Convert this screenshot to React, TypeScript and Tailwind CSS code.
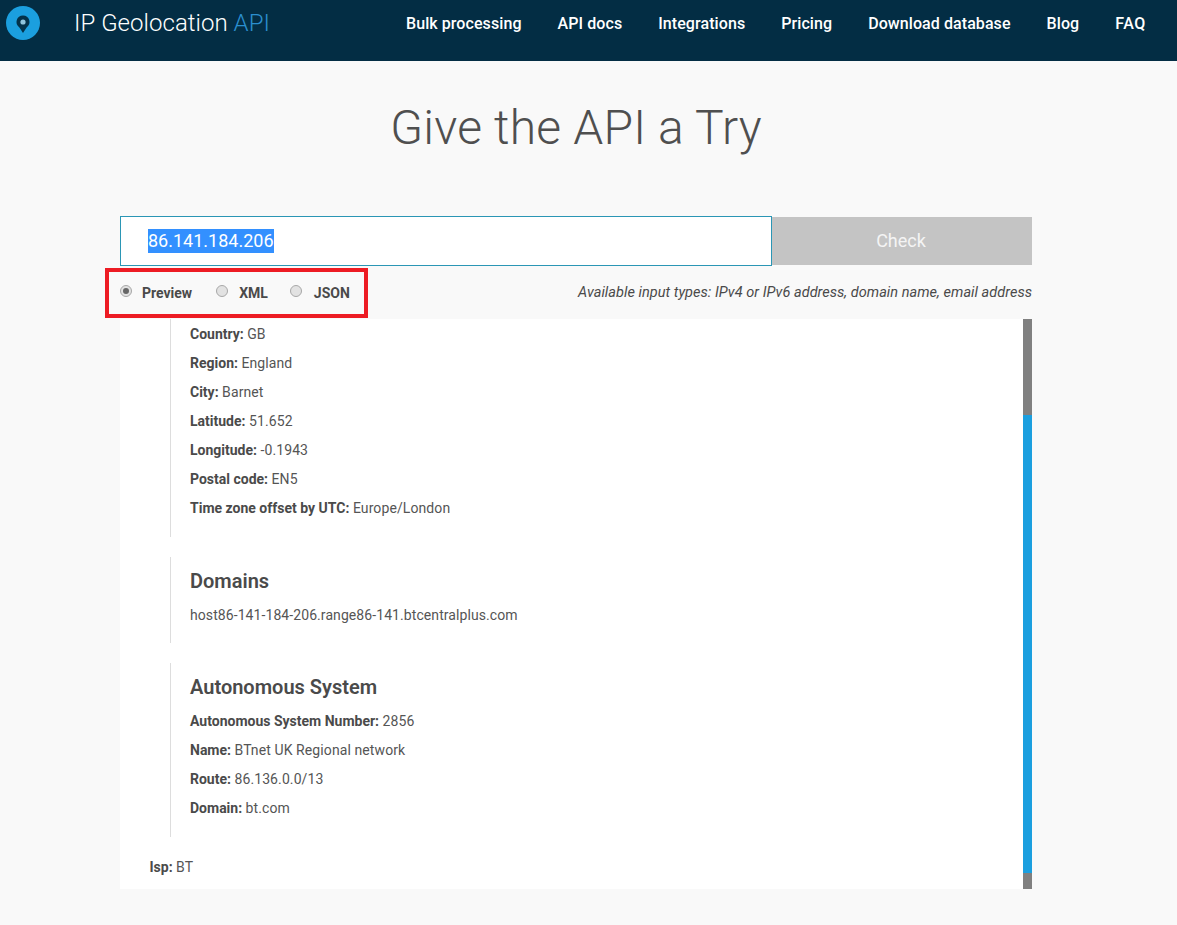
import React from 'react';

const navLinks = ['Bulk processing', 'API docs', 'Integrations', 'Pricing', 'Download database', 'Blog', 'FAQ'];

const location = [
  ['Country:', 'GB'],
  ['Region:', 'England'],
  ['City:', 'Barnet'],
  ['Latitude:', '51.652'],
  ['Longitude:', '-0.1943'],
  ['Postal code:', 'EN5'],
  ['Time zone offset by UTC:', 'Europe/London'],
];

const system = [
  ['Autonomous System Number:', '2856'],
  ['Name:', 'BTnet UK Regional network'],
  ['Route:', '86.136.0.0/13'],
  ['Domain:', 'bt.com'],
];

const Row = ({ label, value }: { label: string; value: string }) => (
  <div className="h-[29px] leading-[29px]">
    <span className="font-bold">{label}</span>{' '}
    <span className="tracking-[0.1px] text-[#555555]">{value}</span>
  </div>
);

const Radio = ({ label, checked, className, gap }: { label: string; checked?: boolean; className: string; gap: string }) => (
  <label className={`flex items-center text-[14px] font-bold text-[#4a4a4a] ${className}`}>
    <span className={`${gap} -mt-[4px] flex h-[12px] w-[12px] items-center justify-center rounded-full border border-[#a8a8a8] bg-[#e2e2e2]`}>
      {checked && <span className="h-[6px] w-[6px] rounded-full bg-[#666666]" />}
    </span>
    <span>{label}</span>
  </label>
);

const Logo = () => (
  <svg width="36" height="36" viewBox="0 0 36 36" className="ml-[5px] shrink-0">
    <circle cx="18" cy="18" r="17" fill="#1b9fdf" />
    <path d="M18 10.5a6.5 6.5 0 0 0-3.6 11.9l3.6 5.6 3.6-5.6a6.5 6.5 0 0 0-3.6-11.9z" fill="#03324a" />
    <circle cx="18" cy="17" r="2.6" fill="#8fc4dc" />
  </svg>
);

export default function App() {
  return (
    <div className="min-h-[925px] bg-[#f9f9f9] font-['Roboto',sans-serif] text-[#4a4a4a]">
      <header className="flex h-[61px] items-start bg-[#032d44] text-white">
        <div className="mt-[5px] flex items-center">
          <Logo />
          <div className="ml-[33px] text-[24px] font-light tracking-[0.04px]">
            IP Geolocation <span className="text-[#2b8fcf]">API</span>
          </div>
        </div>
        <nav className="ml-auto mr-[31px] mt-[12px] flex gap-[36px] text-[16px] font-medium tracking-[0.08px]">
          {navLinks.map((link) => (
            <a key={link} className="last:tracking-[0.6px]">
              {link}
            </a>
          ))}
        </nav>
      </header>

      <main className="mx-[120px] w-[912px]">
        <h1 className="mt-[35px] text-center text-[48px] leading-[64px] font-light tracking-[0.2px] text-[#4f4f4f]">
          Give the API a Try
        </h1>

        <div className="mt-[56px] flex items-center">
          <div className="flex h-[50px] w-[652px] items-center border border-[#2b96b5] bg-white pl-[27px] text-[18px]">
            <span className="bg-[#3390ff] leading-[24px] text-white">86.141.184.206</span>
          </div>
          <button className="h-[48px] w-[260px] bg-[#c4c4c4] pb-[2px] pr-[2px] text-[18px] text-[#f4f4f4]">Check</button>
        </div>

        <div className="mt-[2px] flex items-center justify-between">
          <div className="-ml-[15px] flex h-[50px] w-[263px] items-center border-4 border-[#ed1c24]">
            <Radio label="Preview" checked gap="mr-[10px]" className="ml-[11px]" />
            <Radio label="XML" gap="mr-[11px]" className="ml-[24px]" />
            <Radio label="JSON" gap="mr-[12px]" className="ml-[22px]" />
          </div>
          <div className="pb-px text-[14.5px] tracking-[0.04px] italic">
            Available input types: IPv4 or IPv6 address, domain name, email address
          </div>
        </div>

        <section className="relative mt-px h-[570px] overflow-hidden bg-white text-[14px]">
          <div className="ml-[50px] h-[218px] border-l border-[#dddddd] pl-[19px] pt-px">
            {location.map(([label, value]) => (
              <Row key={label} label={label} value={value} />
            ))}
          </div>

          <div className="ml-[50px] mt-[20px] h-[86px] border-l border-[#dddddd] pl-[19px] pt-[10px]">
            <h3 className="text-[20px] leading-[28px] font-semibold">Domains</h3>
            <div className="mt-[10px] leading-[20px] tracking-[0.08px] text-[#555555]">
              host86-141-184-206.range86-141.btcentralplus.com
            </div>
          </div>

          <div className="ml-[50px] mt-[20px] h-[174px] border-l border-[#dddddd] pl-[19px] pt-[10px]">
            <h3 className="mb-[6px] text-[20px] leading-[28px] font-semibold">Autonomous System</h3>
            {system.map(([label, value]) => (
              <Row key={label} label={label} value={value} />
            ))}
          </div>

          <div className="ml-[29.5px] mt-[16px]">
            <Row label="Isp:" value="BT" />
          </div>

          <div className="absolute right-0 top-0 h-full w-[9px] bg-[#808080]">
            <div className="mt-[96px] h-[458px] bg-[#1b9fdf]" />
          </div>
        </section>
      </main>
    </div>
  );
}
